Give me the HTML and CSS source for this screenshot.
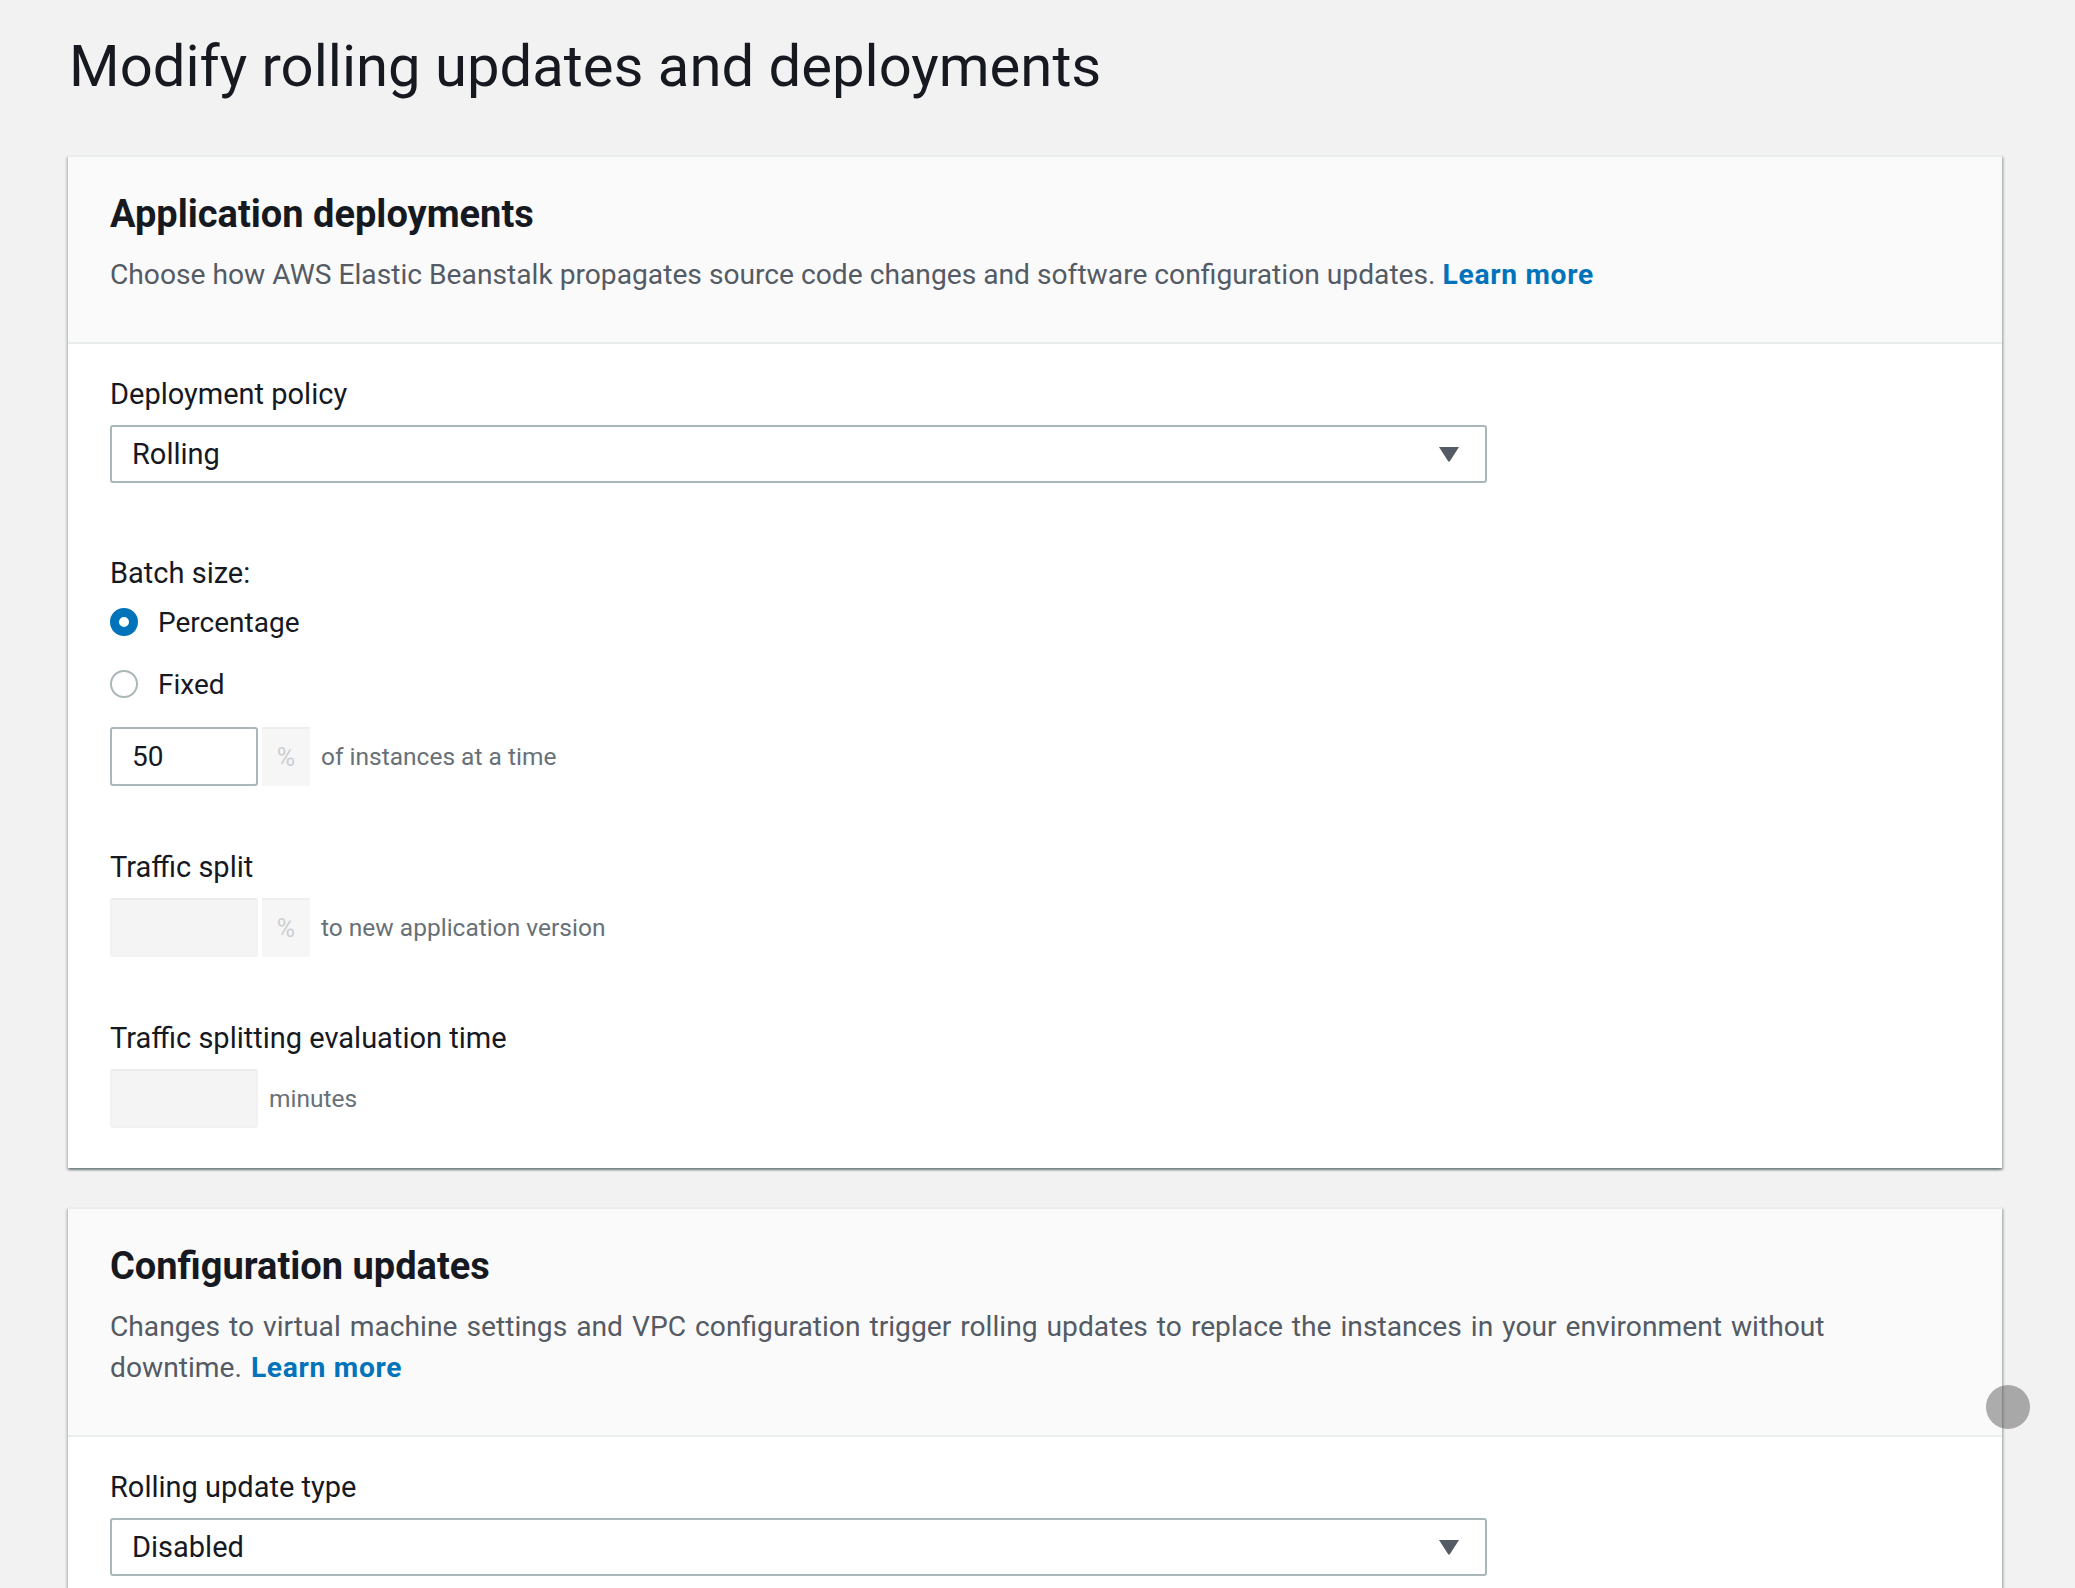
FILE: index.html
```html
<!DOCTYPE html>
<html lang="en">
<head>
<meta charset="utf-8">
<title>Modify rolling updates and deployments</title>
<link rel="stylesheet" href="styles.css">
</head>
<body>
<main class="page">
  <h1 class="page-title">Modify rolling updates and deployments</h1>

  <section class="card">
    <header class="card-header">
      <h2 class="card-title">Application deployments</h2>
      <p class="card-desc">Choose how AWS Elastic Beanstalk propagates source code changes and software configuration updates. <a class="link" href="#">Learn more</a></p>
    </header>
    <div class="card-body">
      <div class="field">
        <div class="field-label">Deployment policy</div>
        <div class="select">
          <span class="select-value">Rolling</span>
          <svg class="caret" width="22" height="16" viewBox="0 0 22 16"><path d="M1 1 H21 L12 15 Q11 16.5 10 15 Z" fill="#545b64"/></svg>
        </div>
      </div>

      <div class="field field-batch">
        <div class="field-label">Batch size:</div>
        <div class="radio-row"><span class="radio radio-checked"></span><span class="radio-label">Percentage</span></div>
        <div class="radio-row radio-row-second"><span class="radio"></span><span class="radio-label">Fixed</span></div>
        <div class="input-group">
          <div class="input">50</div>
          <div class="addon">%</div>
          <span class="suffix">of instances at a time</span>
        </div>
      </div>

      <div class="field field-gap">
        <div class="field-label">Traffic split</div>
        <div class="input-group">
          <div class="input input-disabled"></div>
          <div class="addon">%</div>
          <span class="suffix">to new application version</span>
        </div>
      </div>

      <div class="field field-gap">
        <div class="field-label">Traffic splitting evaluation time</div>
        <div class="input-group">
          <div class="input input-disabled"></div>
          <span class="suffix">minutes</span>
        </div>
      </div>
    </div>
  </section>

  <section class="card">
    <header class="card-header">
      <h2 class="card-title">Configuration updates</h2>
      <p class="card-desc card-desc-wide">Changes to virtual machine settings and VPC configuration trigger rolling updates to replace the instances in your environment without<br>downtime. <a class="link" href="#">Learn more</a></p>
    </header>
    <div class="card-body">
      <div class="field">
        <div class="field-label">Rolling update type</div>
        <div class="select">
          <span class="select-value">Disabled</span>
          <svg class="caret" width="22" height="16" viewBox="0 0 22 16"><path d="M1 1 H21 L12 15 Q11 16.5 10 15 Z" fill="#545b64"/></svg>
        </div>
      </div>
    </div>
  </section>

  <div class="touch-dot"></div>
</main>
</body>
</html>
```

FILE: styles.css
```css
* { box-sizing: border-box; }

html, body {
  margin: 0;
  padding: 0;
  background: #f2f2f2;
}

body {
  font-family: Roboto, "Noto Sans", sans-serif;
  color: #16191f;
  overflow: hidden;
}

.page {
  position: relative;
  padding: 32px 73px 40px 68px;
  min-height: 1588px;
}

.page-title {
  margin: 0 0 55px 1px;
  font-size: 58px;
  line-height: 68px;
  font-weight: 400;
  color: #16191f;
}

.card {
  background: #ffffff;
  border-top: 2px solid #eaeded;
  box-shadow: 0 2px 2px 0 rgba(0, 28, 36, 0.35), 2px 2px 2px 0 rgba(0, 28, 36, 0.18), -2px 2px 2px 0 rgba(0, 28, 36, 0.12);
  margin-bottom: 39px;
}

.card-header {
  background: #fafafa;
  border-bottom: 2px solid #eaeded;
  padding: 35px 42px 47px 42px;
}

.card-title {
  margin: 0;
  font-size: 38px;
  line-height: 44px;
  font-weight: 700;
  color: #16191f;
}

.card-desc {
  margin: 18px 0 0 0;
  font-size: 28.2px;
  line-height: 41px;
  color: #545b64;
}

.card-desc-wide {
  word-spacing: 2px;
}

.link {
  color: #0073bb;
  font-weight: 700;
  letter-spacing: 0.7px;
  word-spacing: 0;
  text-decoration: none;
}

.card-body {
  padding: 30px 42px 40px 42px;
}

.field-label {
  font-size: 29px;
  line-height: 40px;
  color: #16191f;
}

.select {
  margin-top: 11px;
  width: 1377px;
  height: 58px;
  border: 2px solid #aab7b8;
  border-radius: 3px;
  background: #ffffff;
  display: flex;
  align-items: center;
  justify-content: space-between;
  padding: 0 25px 0 20px;
}

.select-value {
  font-size: 29px;
  color: #16191f;
}

.caret { display: block; }

.field-batch { margin-top: 70px; }

.radio-row {
  margin-top: 9px;
  height: 40px;
  display: flex;
  align-items: center;
  gap: 20px;
}

.radio-row-second { margin-top: 22px; }

.radio {
  width: 28px;
  height: 28px;
  border-radius: 50%;
  border: 2px solid #aab7b8;
  background: #ffffff;
  flex: none;
}

.radio-checked {
  border: 9px solid #0073bb;
}

.radio-label {
  font-size: 28px;
  color: #16191f;
}

.input-group {
  margin-top: 11px;
  display: flex;
  align-items: center;
}

.field-batch .input-group { margin-top: 23px; }

.input {
  width: 148px;
  height: 59px;
  border: 2px solid #aab7b8;
  border-radius: 3px;
  background: #ffffff;
  padding: 0 20px;
  font-size: 28px;
  line-height: 55px;
  color: #16191f;
}

.input-disabled {
  background: #f4f4f4;
  border-color: #f2f2f2;
  border-top-color: #e9ebed;
}

.addon {
  margin-left: 4px;
  width: 48px;
  height: 59px;
  background: #f6f6f6;
  border-top: 2px solid #eeeeee;
  display: flex;
  align-items: center;
  justify-content: center;
  font-size: 25px;
  color: #c9cfd1;
}

.suffix {
  margin-left: 11px;
  font-size: 24.5px;
  color: #687078;
}

.field-gap { margin-top: 61px; }

.touch-dot {
  position: absolute;
  left: 1986px;
  top: 1385px;
  width: 44px;
  height: 44px;
  border-radius: 50%;
  background: rgba(80, 80, 80, 0.46);
}
```
